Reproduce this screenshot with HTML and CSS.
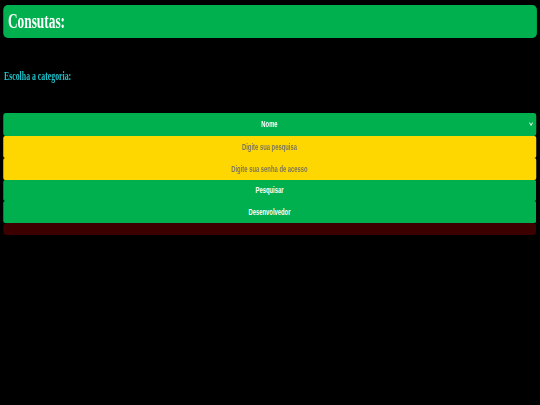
FILE: index.html
```html
<!DOCTYPE html>
<html lang="pt-BR">
<head>
<meta charset="utf-8">
<title>Consutas</title>
<link rel="stylesheet" href="styles.css">
</head>
<body>
<div class="viewport">
  <div class="page">
    <header class="topbar">
      <h1 class="title">Consutas:</h1>
    </header>
    <label class="label" for="categoria">Escolha a categoria:</label>
    <form class="form">
      <div class="select-wrap">
        <select id="categoria" class="select">
          <option>Nome</option>
        </select>
      </div>
      <input class="field" type="text" placeholder="Digite sua pesquisa">
      <input class="field" type="password" placeholder="Digite sua senha de acesso">
      <button class="btn" type="button">Pesquisar</button>
      <button class="btn" type="button">Desenvolvedor</button>
      <div class="result"></div>
    </form>
  </div>
</div>
</body>
</html>
```

FILE: styles.css
```css
html, body {
  margin: 0;
  padding: 0;
  background: #000;
  overflow: hidden;
}

.viewport {
  width: 540px;
  height: 405px;
  overflow: hidden;
}

.page {
  width: 830.77px;
  transform: scaleX(0.65);
  transform-origin: 0 0;
  padding-top: 5px;
}

.topbar {
  margin: 0 4.6px;
  height: 33px;
  background: #00b04f;
  border-radius: 7px / 5px;
}

.title {
  margin: 0;
  padding-left: 7.7px;
  font-family: "Liberation Serif", "Times New Roman", serif;
  font-weight: bold;
  font-size: 20.5px;
  line-height: 33px;
  color: #fff;
}

.label {
  display: block;
  margin: 31px 0 0 6.2px;
  font-family: "Liberation Serif", "Times New Roman", serif;
  font-weight: bold;
  font-size: 12px;
  line-height: 14px;
  color: #1fc3cc;
}

.form {
  display: flex;
  flex-direction: column;
  margin: 30px 6.2px 0 4.6px;
}

.select-wrap {
  position: relative;
}

.select-wrap::after {
  content: "";
  position: absolute;
  right: 6px;
  top: 8px;
  width: 3px;
  height: 3px;
  border-right: 1.2px solid #fff;
  border-bottom: 1.2px solid #fff;
  transform: rotate(45deg);
  pointer-events: none;
}

.select {
  display: block;
  width: 100%;
  height: 22.5px;
  margin: 0;
  padding: 0;
  border: none;
  border-radius: 4px / 3px;
  background: #00b04f;
  color: #fff;
  font-family: "Liberation Sans", Arial, sans-serif;
  font-weight: bold;
  font-size: 9px;
  text-align: center;
  text-align-last: center;
  appearance: none;
  -webkit-appearance: none;
  outline: none;
}

.field {
  display: block;
  box-sizing: border-box;
  width: 100%;
  height: 22px;
  margin: 0;
  padding: 0;
  border: none;
  border-radius: 3px / 2px;
  background: #ffd700;
  color: #333;
  font-family: "Liberation Sans", Arial, sans-serif;
  font-weight: bold;
  font-size: 9px;
  text-align: center;
  outline: none;
}

.field::placeholder {
  color: #7c7658;
  opacity: 1;
}

.btn {
  display: block;
  box-sizing: border-box;
  width: 100%;
  height: 21.5px;
  margin: 0;
  padding: 0;
  border: none;
  border-radius: 3px / 2px;
  background: #00b04f;
  color: #fff;
  font-family: "Liberation Sans", Arial, sans-serif;
  font-weight: bold;
  font-size: 9px;
  text-align: center;
}

.result {
  height: 12px;
  background: #3d0000;
  border-radius: 6px / 4px;
}
```
